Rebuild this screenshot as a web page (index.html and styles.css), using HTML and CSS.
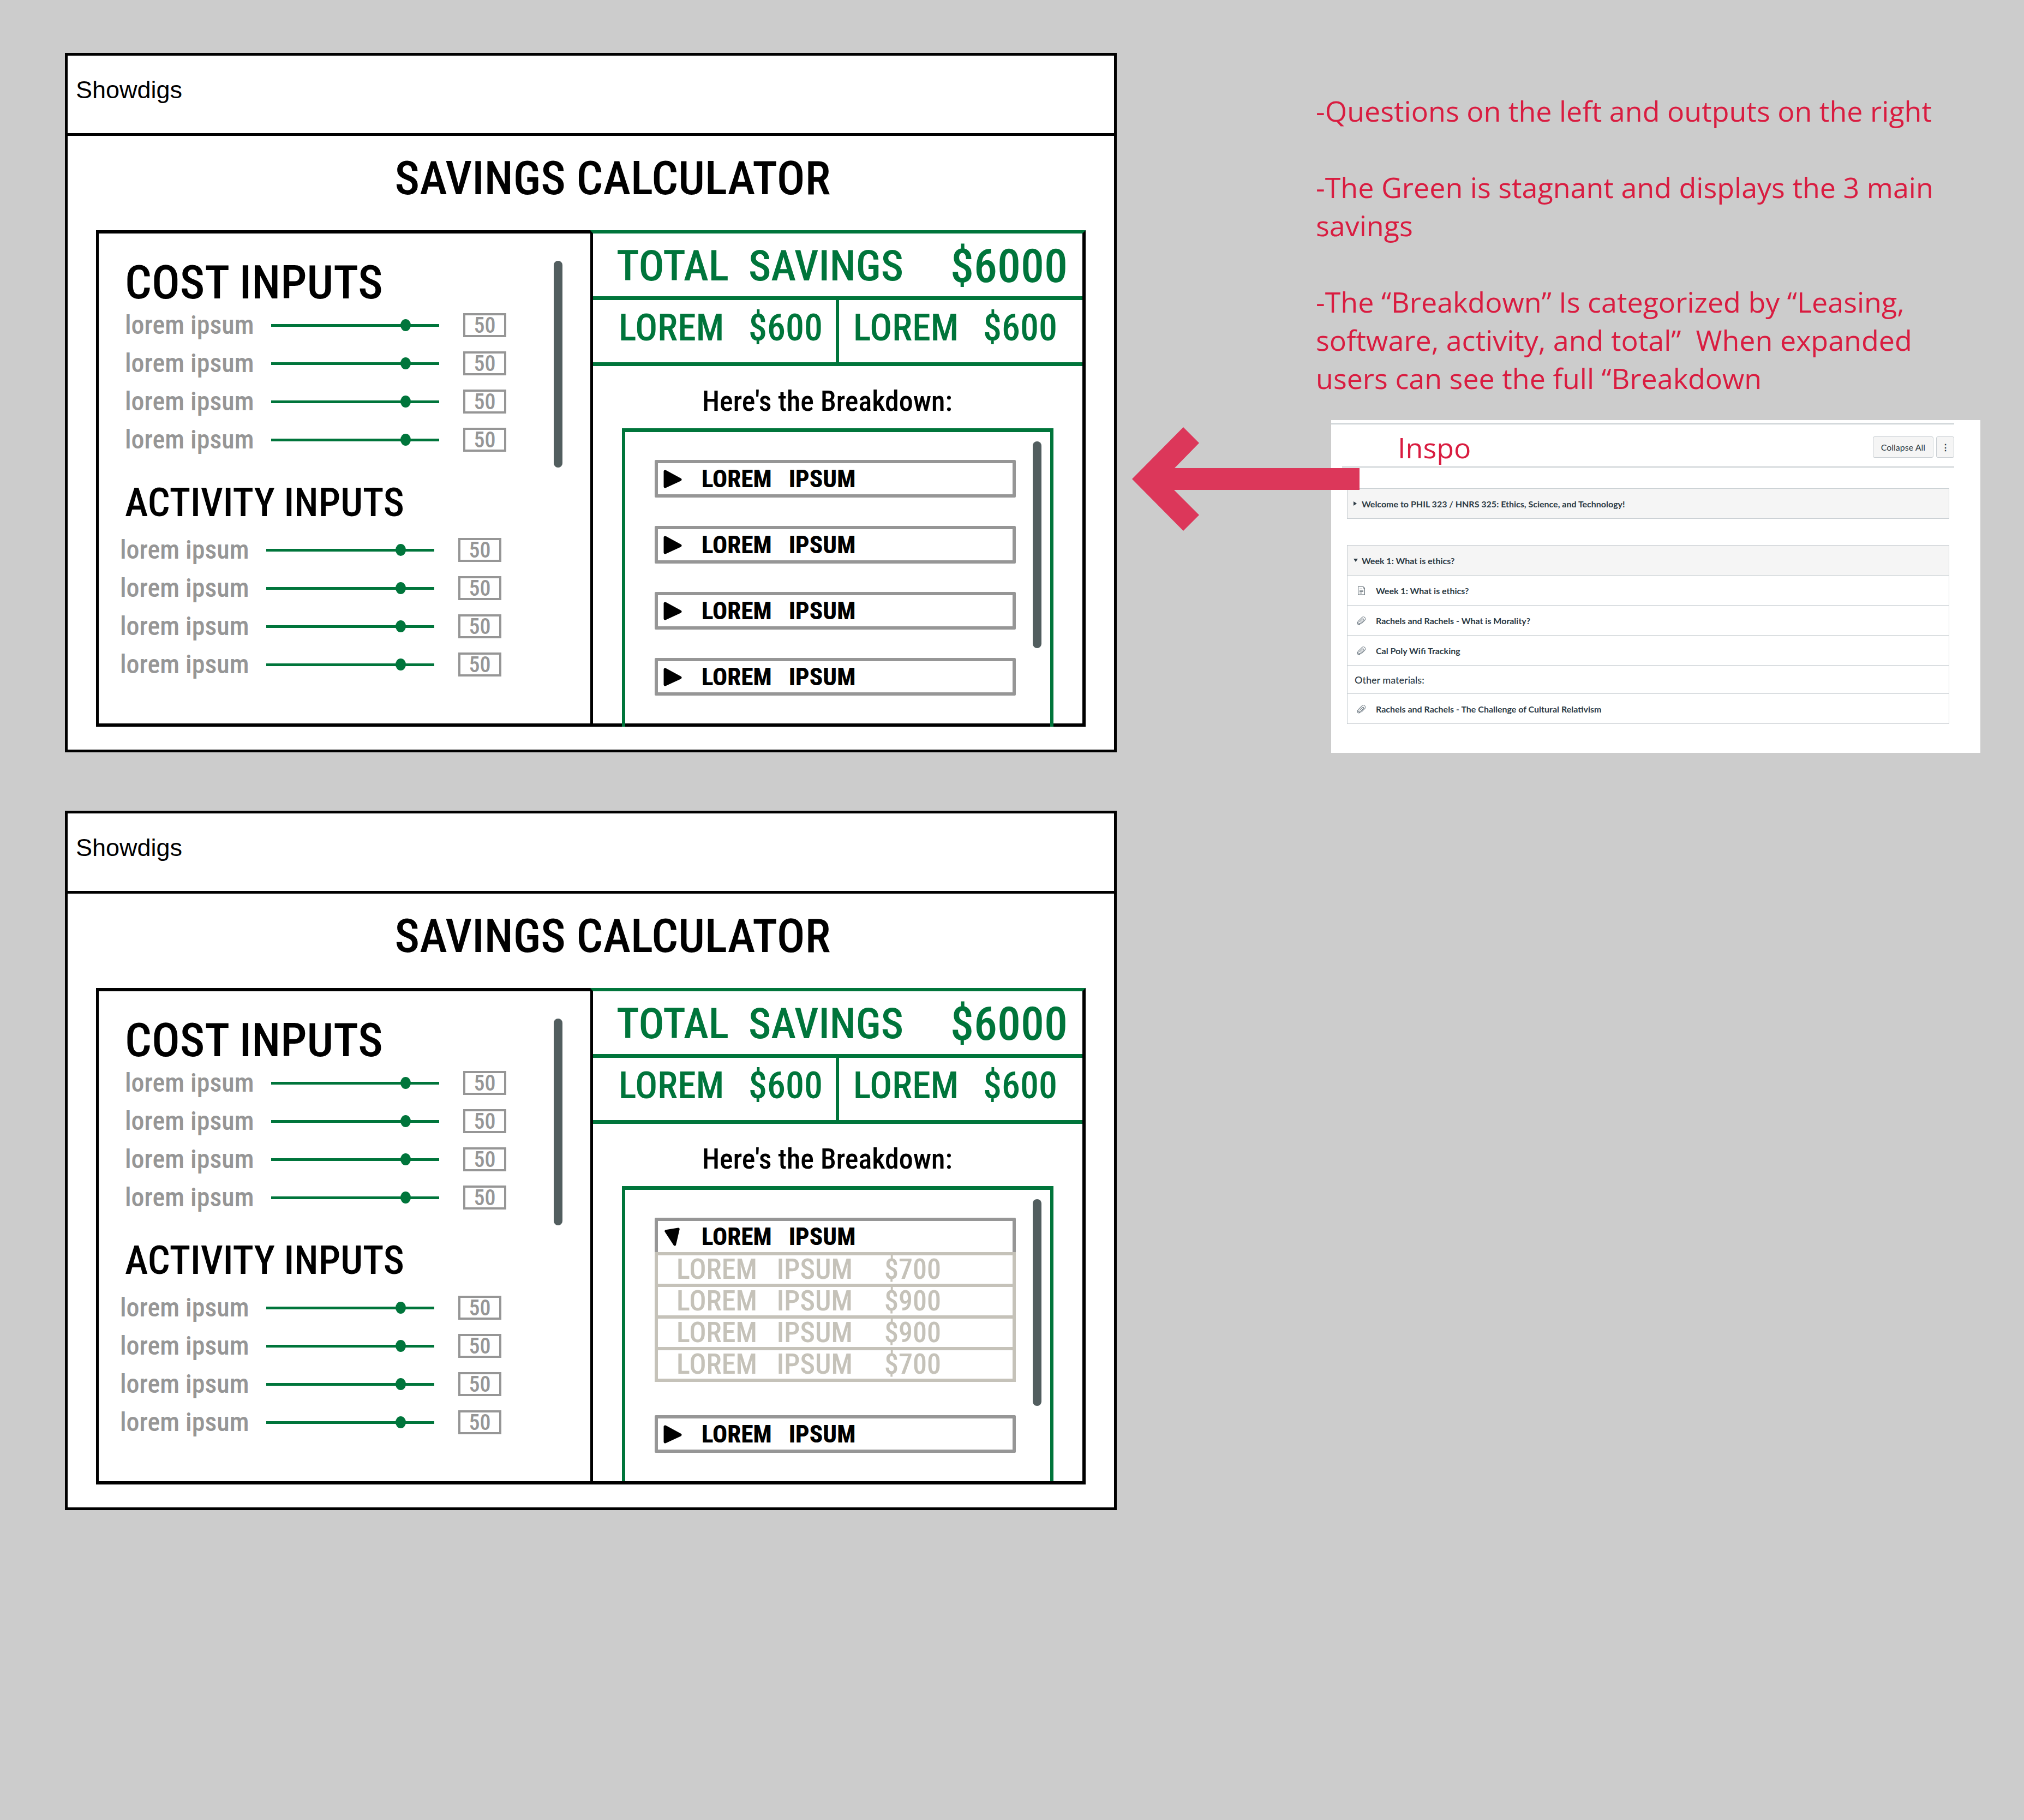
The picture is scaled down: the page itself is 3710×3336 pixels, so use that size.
FILE: index.html
```html
<!DOCTYPE html>
<html lang="en">
<head>
<meta charset="utf-8">
<title>Savings calculator wireframes</title>
<link rel="stylesheet" href="styles.css">
</head>
<body>
<svg class="sprite" aria-hidden="true">
  <symbol id="tri-right" viewBox="0 0 32 32"><path d="M3 3 29 17 3 29Z" fill="#000" stroke="#000" stroke-width="5" stroke-linejoin="round"/></symbol>
  <symbol id="tri-down" viewBox="0 0 32 36"><path d="M3 7 27 3 20 33Z" fill="#000" stroke="#000" stroke-width="5" stroke-linejoin="round"/></symbol>
  <symbol id="clip" viewBox="0 0 16 16"><path d="M4.5 10.5 9.8 5.2a1.3 1.3 0 0 1 1.9 1.9L6.4 12.4a2.5 2.5 0 0 1-3.6-3.6L8.9 2.7a3.4 3.4 0 0 1 4.9 4.8L8 13.4M2.8 8.8C.6 11 1 13 1.700 14.200c1.200 1 3 1 4.700-.8" fill="none" stroke="#6b7780" stroke-width="1"/></symbol>
  <symbol id="doc" viewBox="0 0 14 17"><path d="M1 1h9l3 3v12H1ZM10 1v3h3" fill="none" stroke="#56626b" stroke-width="1"/><path d="M3.500 5.500h5M3.500 8h7M3.500 10.500h7M3.500 13h5" stroke="#56626b" stroke-width="1.200"/></symbol>
</svg>
<main class="board">
  <div class="frames">

    <section class="frame">
      <header class="frame-header">Showdigs</header>
      <h1 class="title">SAVINGS CALCULATOR</h1>
      <div class="panel">
        <div class="inputs">
          <div class="groups">
            <h2>COST INPUTS</h2>
            <div class="rows">
              <div class="row"><label for="a1">lorem ipsum</label><input type="range" id="a1" value="82"><input type="text" class="value" aria-label="Value" value="50"></div>
              <div class="row"><label for="a2">lorem ipsum</label><input type="range" id="a2" value="82"><input type="text" class="value" aria-label="Value" value="50"></div>
              <div class="row"><label for="a3">lorem ipsum</label><input type="range" id="a3" value="82"><input type="text" class="value" aria-label="Value" value="50"></div>
              <div class="row"><label for="a4">lorem ipsum</label><input type="range" id="a4" value="82"><input type="text" class="value" aria-label="Value" value="50"></div>
            </div>
            <h2 class="second">ACTIVITY INPUTS</h2>
            <div class="rows activity">
              <div class="row"><label for="a5">lorem ipsum</label><input type="range" id="a5" value="82"><input type="text" class="value" aria-label="Value" value="50"></div>
              <div class="row"><label for="a6">lorem ipsum</label><input type="range" id="a6" value="82"><input type="text" class="value" aria-label="Value" value="50"></div>
              <div class="row"><label for="a7">lorem ipsum</label><input type="range" id="a7" value="82"><input type="text" class="value" aria-label="Value" value="50"></div>
              <div class="row"><label for="a8">lorem ipsum</label><input type="range" id="a8" value="82"><input type="text" class="value" aria-label="Value" value="50"></div>
            </div>
          </div>
          <div class="scrollbar"></div>
        </div>
        <div class="outputs">
          <div class="total"><span>TOTAL  SAVINGS</span><span class="amount">$6000</span></div>
          <div class="subtotals">
            <div class="subtotal"><span>LOREM</span><span>$600</span></div>
            <div class="subtotal"><span>LOREM</span><span>$600</span></div>
          </div>
          <h3>Here's the Breakdown:</h3>
          <div class="breakdown">
            <div class="items">
              <button type="button" class="item" aria-expanded="false"><svg><use href="#tri-right"/></svg>LOREM   IPSUM</button>
              <button type="button" class="item" aria-expanded="false"><svg><use href="#tri-right"/></svg>LOREM   IPSUM</button>
              <button type="button" class="item" aria-expanded="false"><svg><use href="#tri-right"/></svg>LOREM   IPSUM</button>
              <button type="button" class="item" aria-expanded="false"><svg><use href="#tri-right"/></svg>LOREM   IPSUM</button>
            </div>
            <div class="scrollbar"></div>
          </div>
        </div>
      </div>
    </section>

    <section class="frame">
      <header class="frame-header">Showdigs</header>
      <h1 class="title">SAVINGS CALCULATOR</h1>
      <div class="panel">
        <div class="inputs">
          <div class="groups">
            <h2>COST INPUTS</h2>
            <div class="rows">
              <div class="row"><label for="b1">lorem ipsum</label><input type="range" id="b1" value="82"><input type="text" class="value" aria-label="Value" value="50"></div>
              <div class="row"><label for="b2">lorem ipsum</label><input type="range" id="b2" value="82"><input type="text" class="value" aria-label="Value" value="50"></div>
              <div class="row"><label for="b3">lorem ipsum</label><input type="range" id="b3" value="82"><input type="text" class="value" aria-label="Value" value="50"></div>
              <div class="row"><label for="b4">lorem ipsum</label><input type="range" id="b4" value="82"><input type="text" class="value" aria-label="Value" value="50"></div>
            </div>
            <h2 class="second">ACTIVITY INPUTS</h2>
            <div class="rows activity">
              <div class="row"><label for="b5">lorem ipsum</label><input type="range" id="b5" value="82"><input type="text" class="value" aria-label="Value" value="50"></div>
              <div class="row"><label for="b6">lorem ipsum</label><input type="range" id="b6" value="82"><input type="text" class="value" aria-label="Value" value="50"></div>
              <div class="row"><label for="b7">lorem ipsum</label><input type="range" id="b7" value="82"><input type="text" class="value" aria-label="Value" value="50"></div>
              <div class="row"><label for="b8">lorem ipsum</label><input type="range" id="b8" value="82"><input type="text" class="value" aria-label="Value" value="50"></div>
            </div>
          </div>
          <div class="scrollbar"></div>
        </div>
        <div class="outputs">
          <div class="total"><span>TOTAL  SAVINGS</span><span class="amount">$6000</span></div>
          <div class="subtotals">
            <div class="subtotal"><span>LOREM</span><span>$600</span></div>
            <div class="subtotal"><span>LOREM</span><span>$600</span></div>
          </div>
          <h3>Here's the Breakdown:</h3>
          <div class="breakdown">
            <div class="items">
              <div class="expanded">
                <button type="button" class="item" aria-expanded="true"><svg><use href="#tri-down"/></svg>LOREM   IPSUM</button>
                <table class="lines">
                  <tr><td>LOREM   IPSUM</td><td class="price">$700</td></tr>
                  <tr><td>LOREM   IPSUM</td><td class="price">$900</td></tr>
                  <tr><td>LOREM   IPSUM</td><td class="price">$900</td></tr>
                  <tr><td>LOREM   IPSUM</td><td class="price">$700</td></tr>
                </table>
              </div>
              <button type="button" class="item" aria-expanded="false"><svg><use href="#tri-right"/></svg>LOREM   IPSUM</button>
            </div>
            <div class="scrollbar"></div>
          </div>
        </div>
      </div>
    </section>
  </div>

  <aside class="side">
    <div class="notes">
      <p>-Questions on the left and outputs on the right</p>
      <p>-The Green is stagnant and displays the 3 main<br>savings</p>
      <p>-The “Breakdown” Is categorized by “Leasing,<br>software, activity, and total”  When expanded<br>users can see the full “Breakdown</p>
    </div>
    <div class="card">
      <div class="card-body">
        <div class="toolbar">
          <span class="inspo">Inspo</span>
          <button type="button" class="tool">Collapse All</button>
          <button type="button" class="tool kebab" aria-label="More options">⋮</button>
        </div>
        <div class="modules">
          <section class="module">
            <button type="button" class="module-head"><span class="caret right"></span>Welcome to PHIL 323 / HNRS 325: Ethics, Science, and Technology!</button>
          </section>
          <section class="module">
            <button type="button" class="module-head"><span class="caret down"></span>Week 1: What is ethics?</button>
            <ul>
              <li><svg><use href="#doc"/></svg><a href="#">Week 1: What is ethics?</a></li>
              <li><svg><use href="#clip"/></svg><a href="#">Rachels and Rachels - What is Morality?</a></li>
              <li><svg><use href="#clip"/></svg><a href="#">Cal Poly Wifi Tracking</a></li>
              <li class="sub">Other materials:</li>
              <li><svg><use href="#clip"/></svg><a href="#">Rachels and Rachels - The Challenge of Cultural Relativism</a></li>
            </ul>
          </section>
        </div>
      </div>
      <svg class="arrow" viewBox="0 0 417 190" aria-hidden="true"><path d="M0 95 94 0 123 29 78 75H417V115H77L123 161 94 190Z" fill="#dc375a"/></svg>
    </div>
  </aside>
</main>
</body>
</html>
```
FILE: styles.css
```css
* { box-sizing: border-box; }
body { margin: 0; background: #ccc; color: #000; }
h1, h2, h3, p, ul { margin: 0; padding: 0; }
button, input { font: inherit; color: inherit; margin: 0; }
.sprite { display: none; }

.board {
  display: grid;
  grid-template-columns: 1928fr 1218fr;
  column-gap: 365px;
  padding: 97px 80px 107px 119px;
  align-items: start;
}
.frames { display: grid; row-gap: 107px; }

/* Wireframe */
.frame {
  background: #fff;
  border: 5px solid #000;
  padding-bottom: 42px;
  font-family: "Roboto Condensed", Roboto, sans-serif;
  font-weight: 500;
}
.frame-header {
  height: 147px;
  padding: 0 15px 16px;
  border-bottom: 5px solid #000;
  display: flex;
  align-items: center;
  font: 45px "Liberation Sans", Arial, sans-serif;
}
.title {
  height: 173px;
  padding: 0 0 18px 80px;
  display: flex;
  align-items: center;
  justify-content: center;
  font-size: 86px;
  font-weight: 500;
}
.panel {
  margin: 0 52px;
  display: grid;
  grid-template-columns: 906fr 908fr;
}
.inputs {
  display: flex;
  justify-content: space-between;
  padding: 50px 51px 86px 48px;
  border: solid #000;
  border-width: 6px 0 6px 5px;
}
.groups h2 { font-size: 86px; line-height: 80px; font-weight: 500; margin: 0 0 16px; }
.groups .second { font-size: 72px; margin: 54px 0 24px; }
.rows { display: grid; row-gap: 26px; color: #969696; }
.activity { margin-left: -9px; }
.row { display: grid; grid-template-columns: 268px 308px 123px; height: 44px; align-items: center; }
.row label { font-size: 48px; line-height: 44px; }
.value {
  width: 79px;
  height: 44px;
  margin-left: 44px;
  padding: 0;
  border: 4px solid #969696;
  background: none;
  text-align: center;
  font-size: 40px;
}
input[type="range"] {
  appearance: none;
  width: 308px;
  height: 22px;
  background: linear-gradient(#00753b, #00753b) center / 100% 5px no-repeat;
}
input[type="range"]::-webkit-slider-thumb {
  appearance: none;
  width: 19px;
  height: 22px;
  border-radius: 50%;
  background: #00753b;
}
.scrollbar { width: 16px; height: 379px; border-radius: 8px; background: #525e5f; }
.inputs .scrollbar { margin-left: -44px; }

.outputs {
  display: flex;
  flex-direction: column;
  border: solid #000;
  border-width: 6px 6px 6px 5px;
  border-top-color: #00753b;
}
.total, .subtotal {
  display: flex;
  align-items: center;
  justify-content: space-between;
  color: #00753b;
  white-space: pre;
}
.total {
  height: 122px;
  padding: 4px 27px 0 43px;
  border-bottom: 7px solid #00753b;
  font-size: 78px;
}
.amount { font-size: 86px; }
.subtotals {
  display: grid;
  grid-template-columns: 451fr 446fr;
  height: 121px;
  border-bottom: 7px solid #00753b;
}
.subtotal { padding: 0 46px 12px 26px; font-size: 68px; }
.subtotal:first-child { padding: 0 24px 12px 47px; border-right: 6px solid #00753b; }
.outputs h3 {
  height: 114px;
  padding: 14px 0 0 200px;
  display: flex;
  align-items: center;
  font-size: 52px;
  font-weight: 500;
}
.breakdown {
  flex: 1;
  display: flex;
  margin: 0 53px;
  padding: 17px 16px 52px 54px;
  border: solid #00753b;
  border-width: 7px 6px 0;
}
/* The collapsed list runs over the panel's lower edge */
.frame:first-child .breakdown { margin-bottom: -6px; }
.items { flex: 1; display: flex; flex-direction: column; gap: 52px; margin: 34px 31px 0 0; }
.item {
  display: flex;
  align-items: center;
  gap: 36px;
  width: 100%;
  height: 69px;
  padding: 0 10px;
  border: 6px solid #969696;
  border-radius: 2px;
  background: #fff;
  font-size: 45px;
  font-weight: 800;
  white-space: pre;
}
.item svg { width: 34px; height: 34px; }
.expanded { margin-bottom: 9px; }
.lines {
  position: relative;
  width: 100%;
  margin-top: -6px;
  border-collapse: collapse;
  color: #c5c2b9;
  font-size: 52px;
  line-height: 52px;
}
.lines tr { height: 58px; }
.lines td { border: solid #c5c2b9; border-width: 6px 0 6px 6px; padding: 0 0 0 34px; white-space: pre; }
.lines .price { width: 238px; padding: 0; border-width: 6px 6px 6px 0; }

/* Notes */
.side { padding-top: 71px; }
.notes { color: #d91c40; font: 52px/70px "Open Sans", sans-serif; }
.notes p { white-space: pre-wrap; margin-bottom: 70px; }
.notes p:last-child { margin-bottom: 42px; }

/* Reference card */
.card {
  position: relative;
  margin-left: 28px;
  padding: 6px 48px 53px 0;
  background: #fff;
  font: 16px Lato, sans-serif;
  color: #2d3b45;
}
.card-body { border-top: 2px solid #c7cdd1; }
.toolbar {
  display: flex;
  align-items: center;
  gap: 5px;
  height: 79px;
  margin-left: 20px;
  padding: 6px 0 0 102px;
  border-bottom: 2px solid #c7cdd1;
}
.inspo { flex: 1; color: #d91c40; font: 52px/70px "Open Sans", sans-serif; }
.tool {
  height: 39px;
  padding: 0 14px;
  border: 1px solid #c7cdd1;
  border-radius: 3px;
  background: #f5f5f5;
}
.kebab { padding: 0; width: 33px; font-weight: 700; }
.modules { display: grid; row-gap: 48px; margin: 38px 9px 0 29px; }
.module { border: 1px solid #c7cdd1; }
.module-head {
  display: flex;
  align-items: center;
  width: 100%;
  height: 54px;
  padding: 0 11px;
  border: 0;
  background: #f5f5f5;
  font-weight: 700;
}
.caret { width: 15px; }
.caret::before { content: ""; display: block; width: 0; border: 4px solid transparent; }
.right::before { border-left: 6px solid #2d3b45; border-right: 0; }
.down::before { border-top: 6px solid #2d3b45; border-bottom: 0; }
ul { list-style: none; }
li { display: flex; align-items: center; gap: 18px; height: 55px; padding: 0 17px; border-top: 1px solid #c7cdd1; font-weight: 700; }
li svg { width: 17px; height: 17px; }
li a { color: inherit; text-decoration: none; }
.sub { height: 52px; padding: 0 13px; font-size: 18px; font-weight: 500; }
.arrow { position: absolute; left: -365px; top: 13px; width: 417px; height: 190px; }
```
